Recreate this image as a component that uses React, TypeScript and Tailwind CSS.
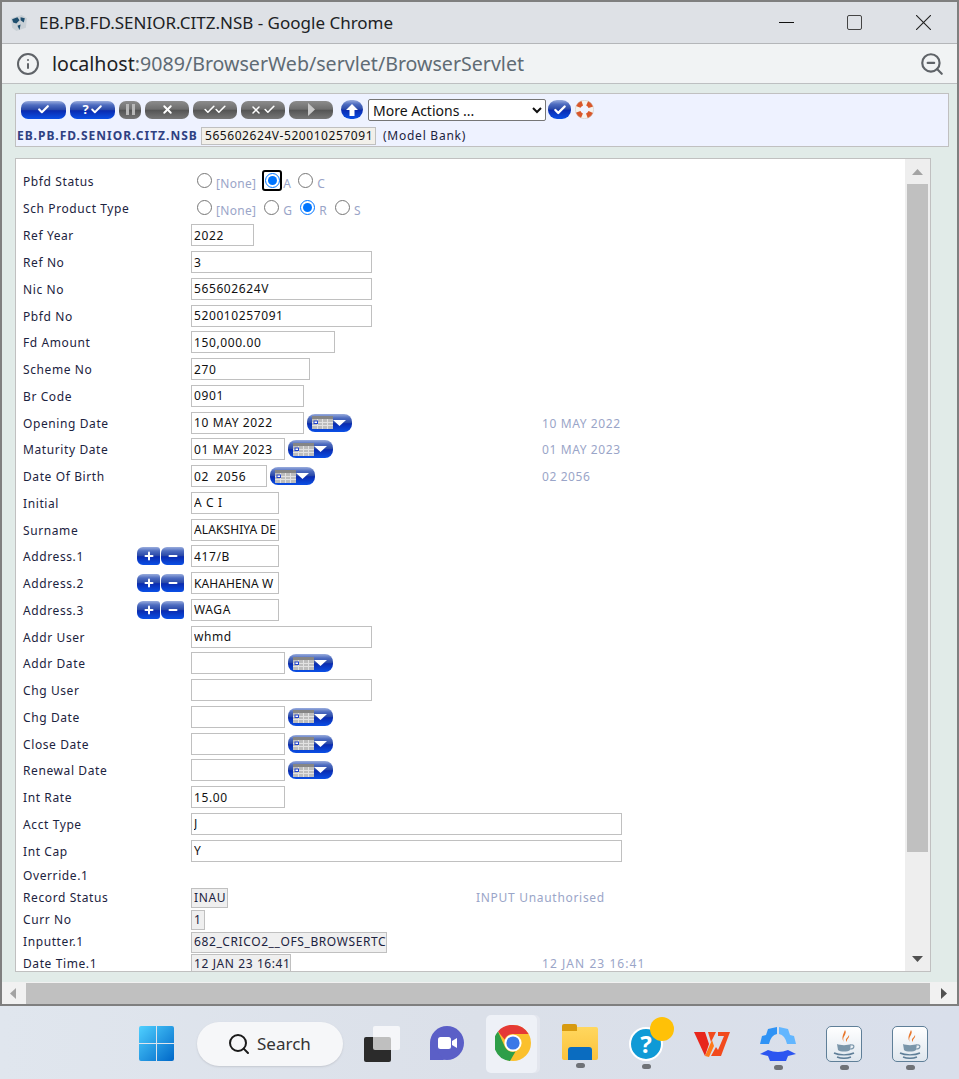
import { Info, ZoomOut, Search, Check, X, Plus, Minus } from 'lucide-react';
import type { ReactNode } from 'react';

const glossBlue = 'bg-[linear-gradient(180deg,#9aaddd_0%,#4f6dc0_22%,#2a49a8_48%,#0a2bb0_54%,#0a4fe6_100%)]';
const glossGrey = 'bg-[linear-gradient(180deg,#8c8c8c_0%,#6e6e6e_45%,#555555_52%,#777777_100%)]';

type Row = {
  label: string;
  value?: string;
  width?: string;
  calendar?: boolean;
  side?: string;
  multi?: boolean;
  tight?: boolean;
};

const rows: Row[] = [
  { label: 'Ref Year', value: '2022', width: 'w-[63px]' },
  { label: 'Ref No', value: '3', width: 'w-[181px]' },
  { label: 'Nic No', value: '565602624V', width: 'w-[181px]' },
  { label: 'Pbfd No', value: '520010257091', width: 'w-[181px]' },
  { label: 'Fd Amount', value: '150,000.00', width: 'w-[144px]' },
  { label: 'Scheme No', value: '270', width: 'w-[119px]' },
  { label: 'Br Code', value: '0901', width: 'w-[113px]' },
  { label: 'Opening Date', value: '10 MAY 2022', width: 'w-[113px]', calendar: true, side: '10 MAY 2022' },
  { label: 'Maturity Date', value: '01 MAY 2023', width: 'w-[94px]', calendar: true, side: '01 MAY 2023' },
  { label: 'Date Of Birth', value: '02  2056', width: 'w-[76px]', calendar: true, side: '02 2056' },
  { label: 'Initial', value: 'A C I', width: 'w-[88px]' },
  { label: 'Surname', value: 'ALAKSHIYA DE', width: 'w-[88px]', tight: true },
  { label: 'Address.1', value: '417/B', width: 'w-[88px]', multi: true },
  { label: 'Address.2', value: 'KAHAHENA W', width: 'w-[88px]', multi: true, tight: true },
  { label: 'Address.3', value: 'WAGA', width: 'w-[88px]', multi: true },
  { label: 'Addr User', value: 'whmd', width: 'w-[181px]' },
  { label: 'Addr Date', value: '', width: 'w-[94px]', calendar: true },
  { label: 'Chg User', value: '', width: 'w-[181px]' },
  { label: 'Chg Date', value: '', width: 'w-[94px]', calendar: true },
  { label: 'Close Date', value: '', width: 'w-[94px]', calendar: true },
  { label: 'Renewal Date', value: '', width: 'w-[94px]', calendar: true },
  { label: 'Int Rate', value: '15.00', width: 'w-[94px]' },
  { label: 'Acct Type', value: 'J', width: 'w-[431px]' },
  { label: 'Int Cap', value: 'Y', width: 'w-[431px]' },
];

function Pill({ grey, className, children }: { grey?: boolean; className: string; children?: ReactNode }) {
  return (
    <span className={`flex h-[18px] items-center justify-center gap-px rounded-[7px] text-white ${grey ? glossGrey : glossBlue} ${className}`}>
      {children}
    </span>
  );
}

function CalendarButton() {
  return (
    <span className={`ml-[3px] flex h-[18px] w-[45px] shrink-0 items-center justify-between rounded-[8px] pl-[5px] pr-[6px] ${glossBlue}`}>
      <svg width="21" height="13" viewBox="0 0 21 13">
        <rect width="21" height="13" fill="#bdbdbd" />
        <rect width="21" height="3" fill="#858585" />
        <path d="M0 6.5H21M0 9.5H21M5.5 3V13M10.5 3V13M15.5 3V13" stroke="#e2e2e2" strokeWidth="1" />
        <rect x="2" y="5" width="3.5" height="2.5" fill="#ffffff" stroke="#2244cc" strokeWidth="1" />
      </svg>
      <svg width="13" height="6" viewBox="0 0 13 6">
        <path d="M0 0H13L6.5 6Z" fill="#ffffff" />
      </svg>
    </span>
  );
}

function Radio({ label, checked }: { label: string; checked?: boolean }) {
  return (
    <span className="mr-[8px] flex items-center">
      <input type="radio" checked={!!checked} readOnly className="m-0 mb-[3px] mr-[4px] h-[15px] w-[15px]" />
      <span className="mt-[4px] tracking-[0.3px] text-[#9aa5c8]">{label}</span>
    </span>
  );
}

function MultiButton({ children }: { children: ReactNode }) {
  return (
    <span className={`flex h-[18px] w-[23px] items-center justify-center rounded-l-[6px] rounded-r-[3px] text-white ${glossBlue}`}>
      {children}
    </span>
  );
}

function Chrome() {
  return (
    <svg width="36" height="36" viewBox="0 0 36 36">
      <circle cx="18" cy="18" r="18" fill="#fbc02d" />
      <path d="M18 0A18 18 0 0 1 33.6 9H18A9 9 0 0 0 9.6 14.6L3 6.5A18 18 0 0 1 18 0Z" fill="#e53935" />
      <path d="M3 6.5L10.2 22.5A9 9 0 0 0 20.5 26.6L15 36A18 18 0 0 1 3 6.5Z" fill="#2e9e48" />
      <circle cx="18" cy="18" r="8.6" fill="#ffffff" />
      <circle cx="18" cy="18" r="6.6" fill="#3b78e7" />
    </svg>
  );
}

function Java() {
  return (
    <span className="flex h-[36px] w-[36px] items-center justify-center rounded-[5px] border border-[#5f7f98] bg-[linear-gradient(180deg,#ffffff,#dfe7ee)]">
      <svg width="26" height="30" viewBox="0 0 26 30">
        <path d="M14 1C17 5 10 8 13 13C10 9 12 6 14 1ZM18 6C19 9 15 10 16 13C13 10 17 9 18 6Z" fill="#e8762b" />
        <path d="M6 15C9 16.5 17 16.5 20 15L19 21C17 23 9 23 7 21Z" fill="#7a96aa" />
        <path d="M20 16C24 15 24 20 19 20" fill="none" stroke="#7a96aa" strokeWidth="1.2" />
        <path d="M3 24C8 26.5 18 26.5 23 24M6 28C10 29.5 16 29.5 20 28" fill="none" stroke="#5f7f98" strokeWidth="1.4" />
      </svg>
    </span>
  );
}

function Dot({ active }: { active?: boolean }) {
  return <span className={`mt-[3px] h-[5px] rounded-full ${active ? 'w-[24px] bg-[#0067c0]' : 'w-[9px] bg-[#6f7277]'}`} />;
}

export default function App() {
  return (
    <div className="flex h-[1079px] w-[959px] flex-col overflow-hidden bg-[#dde3ec] font-['Noto_Sans',sans-serif] text-[12px] text-[#1c2340]">
      <div className="flex h-[1006px] shrink-0 flex-col border-x-2 border-y-2 border-[#7f7f7f] bg-[#e1ebe8]">
        {/* chrome title bar */}
        <div className="flex h-[42px] shrink-0 items-center border-b border-[#b4b6b9] bg-[#dee1e6] pl-[8px] pr-[26px]">
          <svg width="18" height="18" viewBox="0 0 17 17">
            <path d="M1 4L11 1L16 4L15 13L6 16L2 13Z" fill="#c9d0d6" />
            <path d="M2 5L7 3L9 6L6 9L3 8ZM10 3L14 4L13 8L10 6ZM7 11L10 10L9 15Z" fill="#1f4e6e" />
          </svg>
          <span className="ml-[11px] text-[17px] text-[#202124]">EB.PB.FD.SENIOR.CITZ.NSB - Google Chrome</span>
          <div className="ml-auto flex items-center gap-[53px]">
            <span className="h-px w-[15px] bg-[#111111]" />
            <span className="h-[15px] w-[15px] rounded-[2px] border-[1.5px] border-[#444444]" />
            <svg width="15" height="15" viewBox="0 0 15 15" className="ml-px">
              <path d="M0 0L15 15M15 0L0 15" stroke="#222222" strokeWidth="1.1" />
            </svg>
          </div>
        </div>

        {/* address bar */}
        <div className="flex h-[40px] shrink-0 items-center border-b border-[#bdbfc1] bg-[#f1f3f4] pl-[14px] pr-[12px]">
          <Info size={24} strokeWidth={2} className="text-[#5f6368]" />
          <span className="ml-[12px] text-[19.6px] text-[#5f6b75]">
            <span className="text-[#202124]">localhost</span>:9089/BrowserWeb/servlet/BrowserServlet
          </span>
          <ZoomOut size={26} strokeWidth={2} className="ml-auto text-[#5f6368]" />
        </div>

        {/* page */}
        <div className="flex min-h-0 flex-1 flex-col pl-[13px] pr-[8px] pt-[9px]">
          <div className="h-[54px] shrink-0 border border-[#c0c0c0] bg-[#eef2ff] pl-[1px]">
            <div className="flex h-[31px] items-center pl-[4px]">
              <Pill className="w-[45px]"><Check size={13} strokeWidth={4} /></Pill>
              <Pill className="ml-[4px] w-[45px] text-[13px] font-bold">?<Check size={13} strokeWidth={3.5} /></Pill>
              <Pill grey className="ml-[4px] w-[22px]">
                <svg width="9" height="11" viewBox="0 0 9 11"><path d="M0 0H3V11H0ZM6 0H9V11H6Z" fill="#b8b8b8" /></svg>
              </Pill>
              <Pill grey className="ml-[4px] w-[44px] text-[#d0d0d0]"><X size={13} strokeWidth={3.5} /></Pill>
              <Pill grey className="ml-[4px] w-[44px] text-[#d0d0d0]"><Check size={13} strokeWidth={3} /><Check size={13} strokeWidth={3} className="-ml-[3px]" /></Pill>
              <Pill grey className="ml-[4px] w-[44px] text-[#d0d0d0]"><X size={12} strokeWidth={3} /><Check size={13} strokeWidth={3} /></Pill>
              <Pill grey className="ml-[4px] w-[44px]">
                <svg width="7" height="13" viewBox="0 0 7 13"><path d="M0 0L7 6.5L0 13Z" fill="#c8c8c8" /></svg>
              </Pill>
              <span className={`ml-[8px] flex h-[19px] w-[22px] items-center justify-center rounded-full ${glossBlue}`}>
                <svg width="12" height="12" viewBox="0 0 12 12"><path d="M6 0L12 6H8.5V12H3.5V6H0Z" fill="#ffffff" /></svg>
              </span>
              <select className="ml-[5px] h-[22px] w-[178px] rounded-[2px] border border-[#767676] bg-white font-['Noto_Sans',sans-serif] text-[14px] text-[#111111]">
                <option>More Actions ...</option>
              </select>
              <span className={`ml-[2px] flex h-[19px] w-[23px] items-center justify-center rounded-[9px] text-white ${glossBlue}`}>
                <Check size={14} strokeWidth={4} />
              </span>
              <svg width="19" height="19" viewBox="0 0 19 19" className="ml-[4px]">
                <circle cx="9.5" cy="9.5" r="6.8" fill="none" stroke="#f4f1ec" strokeWidth="5" />
                <circle cx="9.5" cy="9.5" r="6.8" fill="none" stroke="#d9572a" strokeWidth="5" strokeDasharray="5.6 5.08" strokeDashoffset="-2.54" />
                <circle cx="9.5" cy="9.5" r="9.2" fill="none" stroke="#c8c2ba" strokeWidth="0.5" />
              </svg>
            </div>
            <div className="flex h-[21px] items-center">
              <span className="w-[184px] whitespace-nowrap font-bold tracking-[1px] text-[#2f4182]">EB.PB.FD.SENIOR.CITZ.NSB</span>
              <span className="flex h-[18px] w-[175px] items-center whitespace-nowrap border border-[#c0c0c0] bg-[#f2f0ea] pl-[3px] tracking-[0.56px] text-[#111111]">565602624V-520010257091</span>
              <span className="ml-[7px] tracking-[0.75px] text-[#1c2340]">(Model Bank)</span>
            </div>
          </div>

          {/* contract form with its own scrollbars */}
          <div className="mt-[11px] flex h-[814px] w-[916px] shrink-0 border border-[#c0c0c0] bg-white tracking-[0.6px]">
            <div className="min-w-0 flex-1 overflow-hidden pl-[7px] pt-[9px]">
              <div className="grid h-[27px] grid-cols-[168px_1fr] items-center">
                <span>Pbfd Status</span>
                <div className="flex items-center pl-[6px]">
                  <Radio label="[None]" />
                  <span className="mb-[2px] ml-[-2px] mr-px flex h-[21px] w-[20px] shrink-0 items-center justify-center rounded-[3px] border-2 border-black">
                    <input type="radio" checked readOnly className="m-0 h-[15px] w-[15px]" />
                  </span>
                  <span className="mr-[7px] mt-[4px] tracking-[0.3px] text-[#9aa5c8]">A</span>
                  <Radio label="C" />
                </div>
              </div>
              <div className="grid h-[27px] grid-cols-[168px_1fr] items-center">
                <span>Sch Product Type</span>
                <div className="flex items-center pl-[6px]">
                  <Radio label="[None]" />
                  <Radio label="G" />
                  <Radio label="R" checked />
                  <Radio label="S" />
                </div>
              </div>
              {rows.map((row) => (
                <div key={row.label} className="grid h-[26.75px] grid-cols-[168px_351px_1fr] items-center">
                  <div className="flex items-center justify-between pr-[7px]">
                    <span className="mt-[2px]">{row.label}</span>
                    {row.multi && (
                      <span className="flex gap-[1px]">
                        <MultiButton><Plus size={12} strokeWidth={4} /></MultiButton>
                        <MultiButton><Minus size={12} strokeWidth={4} /></MultiButton>
                      </span>
                    )}
                  </div>
                  <div className="flex items-center">
                    <input
                      readOnly
                      value={row.value}
                      className={`h-[22px] shrink-0 border border-[#c0c0c0] px-[2px] text-[12px] text-[#111111] outline-none ${row.tight ? 'tracking-[0.1px]' : ''} ${row.width}`}
                    />
                    {row.calendar && <CalendarButton />}
                  </div>
                  <span className="mt-[2px] text-[#9aa5c8]">{row.side}</span>
                </div>
              ))}
              <div className="flex h-[23px] items-center">Override.1</div>
              <div className="grid h-[22px] grid-cols-[168px_1fr] items-center">
                <span>Record Status</span>
                <div className="flex items-center">
                  <span className="flex h-[20px] w-[37px] items-center border border-[#c0c0c0] bg-[#efefef] pl-[2px]">INAU</span>
                  <span className="ml-[248px] tracking-[0.7px] text-[#9aa5c8]">INPUT Unauthorised</span>
                </div>
              </div>
              <div className="grid h-[22px] grid-cols-[168px_1fr] items-center">
                <span>Curr No</span>
                <span className="flex h-[20px] w-[14px] items-center border border-[#c0c0c0] bg-[#efefef] pl-[2px]">1</span>
              </div>
              <div className="grid h-[22px] grid-cols-[168px_1fr] items-center">
                <span>Inputter.1</span>
                <span className="flex h-[21px] w-[196px] items-center overflow-hidden whitespace-nowrap border border-[#c0c0c0] bg-[#efefef] pl-[2px]">682_CRICO2__OFS_BROWSERTC</span>
              </div>
              <div className="grid h-[22px] grid-cols-[168px_351px_1fr] items-center">
                <span>Date Time.1</span>
                <span className="flex h-[21px] w-[100px] items-center whitespace-nowrap border border-[#c0c0c0] bg-[#efefef] pl-[2px]">12 JAN 23 16:41</span>
                <span className="tracking-[1.05px] text-[#9aa5c8]">12 JAN 23 16:41</span>
              </div>
            </div>
            <div className="flex w-[25px] shrink-0 flex-col items-center bg-[#eeeeee]">
              <div className="flex h-[25px] shrink-0 items-center justify-center">
                <svg width="11" height="6" viewBox="0 0 11 6"><path d="M0 6L5.5 0L11 6Z" fill="#a3a3a3" /></svg>
              </div>
              <div className="h-[668px] w-[21px] shrink-0 bg-[#c0c0c0]" />
              <div className="mt-auto flex h-[25px] shrink-0 items-center justify-center">
                <svg width="11" height="6" viewBox="0 0 11 6"><path d="M0 0L5.5 6L11 0Z" fill="#505050" /></svg>
              </div>
            </div>
          </div>
          <div className="flex-1" />
        </div>

        {/* page horizontal scrollbar */}
        <div className="flex h-[22px] shrink-0 items-center bg-[#f1f1f1]">
          <div className="flex w-[24px] shrink-0 justify-center pr-[2px]">
            <svg width="6" height="11" viewBox="0 0 6 11"><path d="M6 0L0 5.5L6 11Z" fill="#a3a3a3" /></svg>
          </div>
          <div className="h-[21px] w-[904px] shrink-0 bg-[#c0c0c0]" />
          <div className="flex flex-1 justify-center">
            <svg width="6" height="11" viewBox="0 0 6 11"><path d="M0 0L6 5.5L0 11Z" fill="#505050" /></svg>
          </div>
        </div>
      </div>

      {/* windows taskbar */}
      <div className="flex flex-1 items-center bg-[linear-gradient(90deg,#e0e6ee,#dbe0e9_50%,#d9dfeb)] pl-[139px] pt-[2px]">
        <svg width="35" height="35" viewBox="0 0 35 35" className="shrink-0">
          <defs>
            <linearGradient id="win" x1="0" y1="0" x2="1" y2="1">
              <stop offset="0" stopColor="#4fd0ff" />
              <stop offset="1" stopColor="#0067c8" />
            </linearGradient>
          </defs>
          <path d="M2 0H17V17H0V2Q0 0 2 0ZM18 0H33Q35 0 35 2V17H18ZM0 18H17V35H2Q0 35 0 33ZM18 18H35V33Q35 35 33 35H18Z" fill="url(#win)" />
        </svg>
        <div className="ml-[23px] flex h-[44px] w-[146px] shrink-0 items-center rounded-full bg-[#f6f7f9] pl-[30px] shadow-[0_1px_2px_#c4c8d0]">
          <Search size={24} strokeWidth={2} className="text-[#1a1a1a]" />
          <span className="ml-[6px] text-[17px] text-[#333333]">Search</span>
        </div>
        <div className="relative ml-[21px] h-[36px] w-[36px] shrink-0">
          <span className="absolute bottom-0 left-0 h-[25px] w-[27px] rounded-[2px] bg-[#2b2b2b]" />
          <span className="absolute right-0 top-0 h-[24px] w-[27px] rounded-[2px] bg-white/70" />
        </div>
        <svg width="34" height="36" viewBox="0 0 34 36" className="ml-[30px] shrink-0">
          <circle cx="17" cy="17" r="17" fill="#5b5fc7" />
          <path d="M0 17V34H14Z" fill="#5b5fc7" />
          <rect x="8" y="11" width="13" height="12" rx="2.5" fill="#ffffff" />
          <path d="M22 15L27 12V22L22 19Z" fill="#ffffff" />
        </svg>
        <div className="ml-[22px] flex h-[58px] w-[51px] shrink-0 flex-col items-center rounded-[5px] bg-[#eef1f7] pl-[3px] pt-[10px] shadow-[3px_0_0_#e3e6ee]">
          <Chrome />
          <span className="mt-[6px]"><Dot active /></span>
        </div>
        <div className="ml-[25px] flex w-[36px] shrink-0 flex-col items-center pt-[8px]">
          <div className="relative h-[33px] w-[36px] rounded-[2px] bg-[linear-gradient(180deg,#ffd75e,#fbc23c)]">
            <span className="absolute -top-[3px] left-0 h-[7px] w-[15px] rounded-t-[2px] bg-[#d79a10]" />
            <span className="absolute bottom-0 left-[6px] h-[13px] w-[24px] rounded-t-[3px] bg-[#0a6cc0]" />
          </div>
          <Dot />
        </div>
        <div className="relative ml-[30px] flex w-[36px] shrink-0 flex-col items-center pt-[8px]">
          <span className="flex h-[34px] w-[34px] items-center justify-center rounded-full border-2 border-white bg-[#0f9ad6] text-[24px] font-bold leading-none text-white">?</span>
          <span className="absolute -right-[10px] top-[-2px] h-[24px] w-[24px] rounded-full bg-[#ffc107]" />
          <Dot />
        </div>
        <svg width="36" height="28" viewBox="0 0 36 28" className="ml-[30px] shrink-0">
          <path d="M0 2H11L15 14L11 26Z" fill="#e8261c" />
          <path d="M14 2H22L17 12ZM24 2H36L27 26H17L22 17L24 20L30 6H24Z" fill="#f24a1d" />
          <path d="M11 26L18 10L20 16L15 27Z" fill="#ff7a1a" />
        </svg>
        <div className="ml-[30px] flex w-[36px] shrink-0 flex-col items-center pt-[8px]">
          <svg width="36" height="36" viewBox="0 0 36 36">
            <path d="M17 1V8Q11 9 9 18L0 18L2 10L6 9L8 3Z" fill="#2f93f5" />
            <path d="M19 1V8Q25 9 27 18L36 18L34 10L30 9L28 3Z" fill="#62b6ff" />
            <path d="M8 24Q18 28 28 24L36 28L28 30L26 35H10L8 30L0 28Z" fill="#2c55f0" />
          </svg>
          <Dot />
        </div>
        <div className="ml-[30px] flex w-[36px] shrink-0 flex-col items-center pt-[8px]">
          <Java />
          <Dot />
        </div>
        <div className="ml-[30px] flex w-[36px] shrink-0 flex-col items-center pt-[8px]">
          <Java />
          <Dot />
        </div>
      </div>
    </div>
  );
}
